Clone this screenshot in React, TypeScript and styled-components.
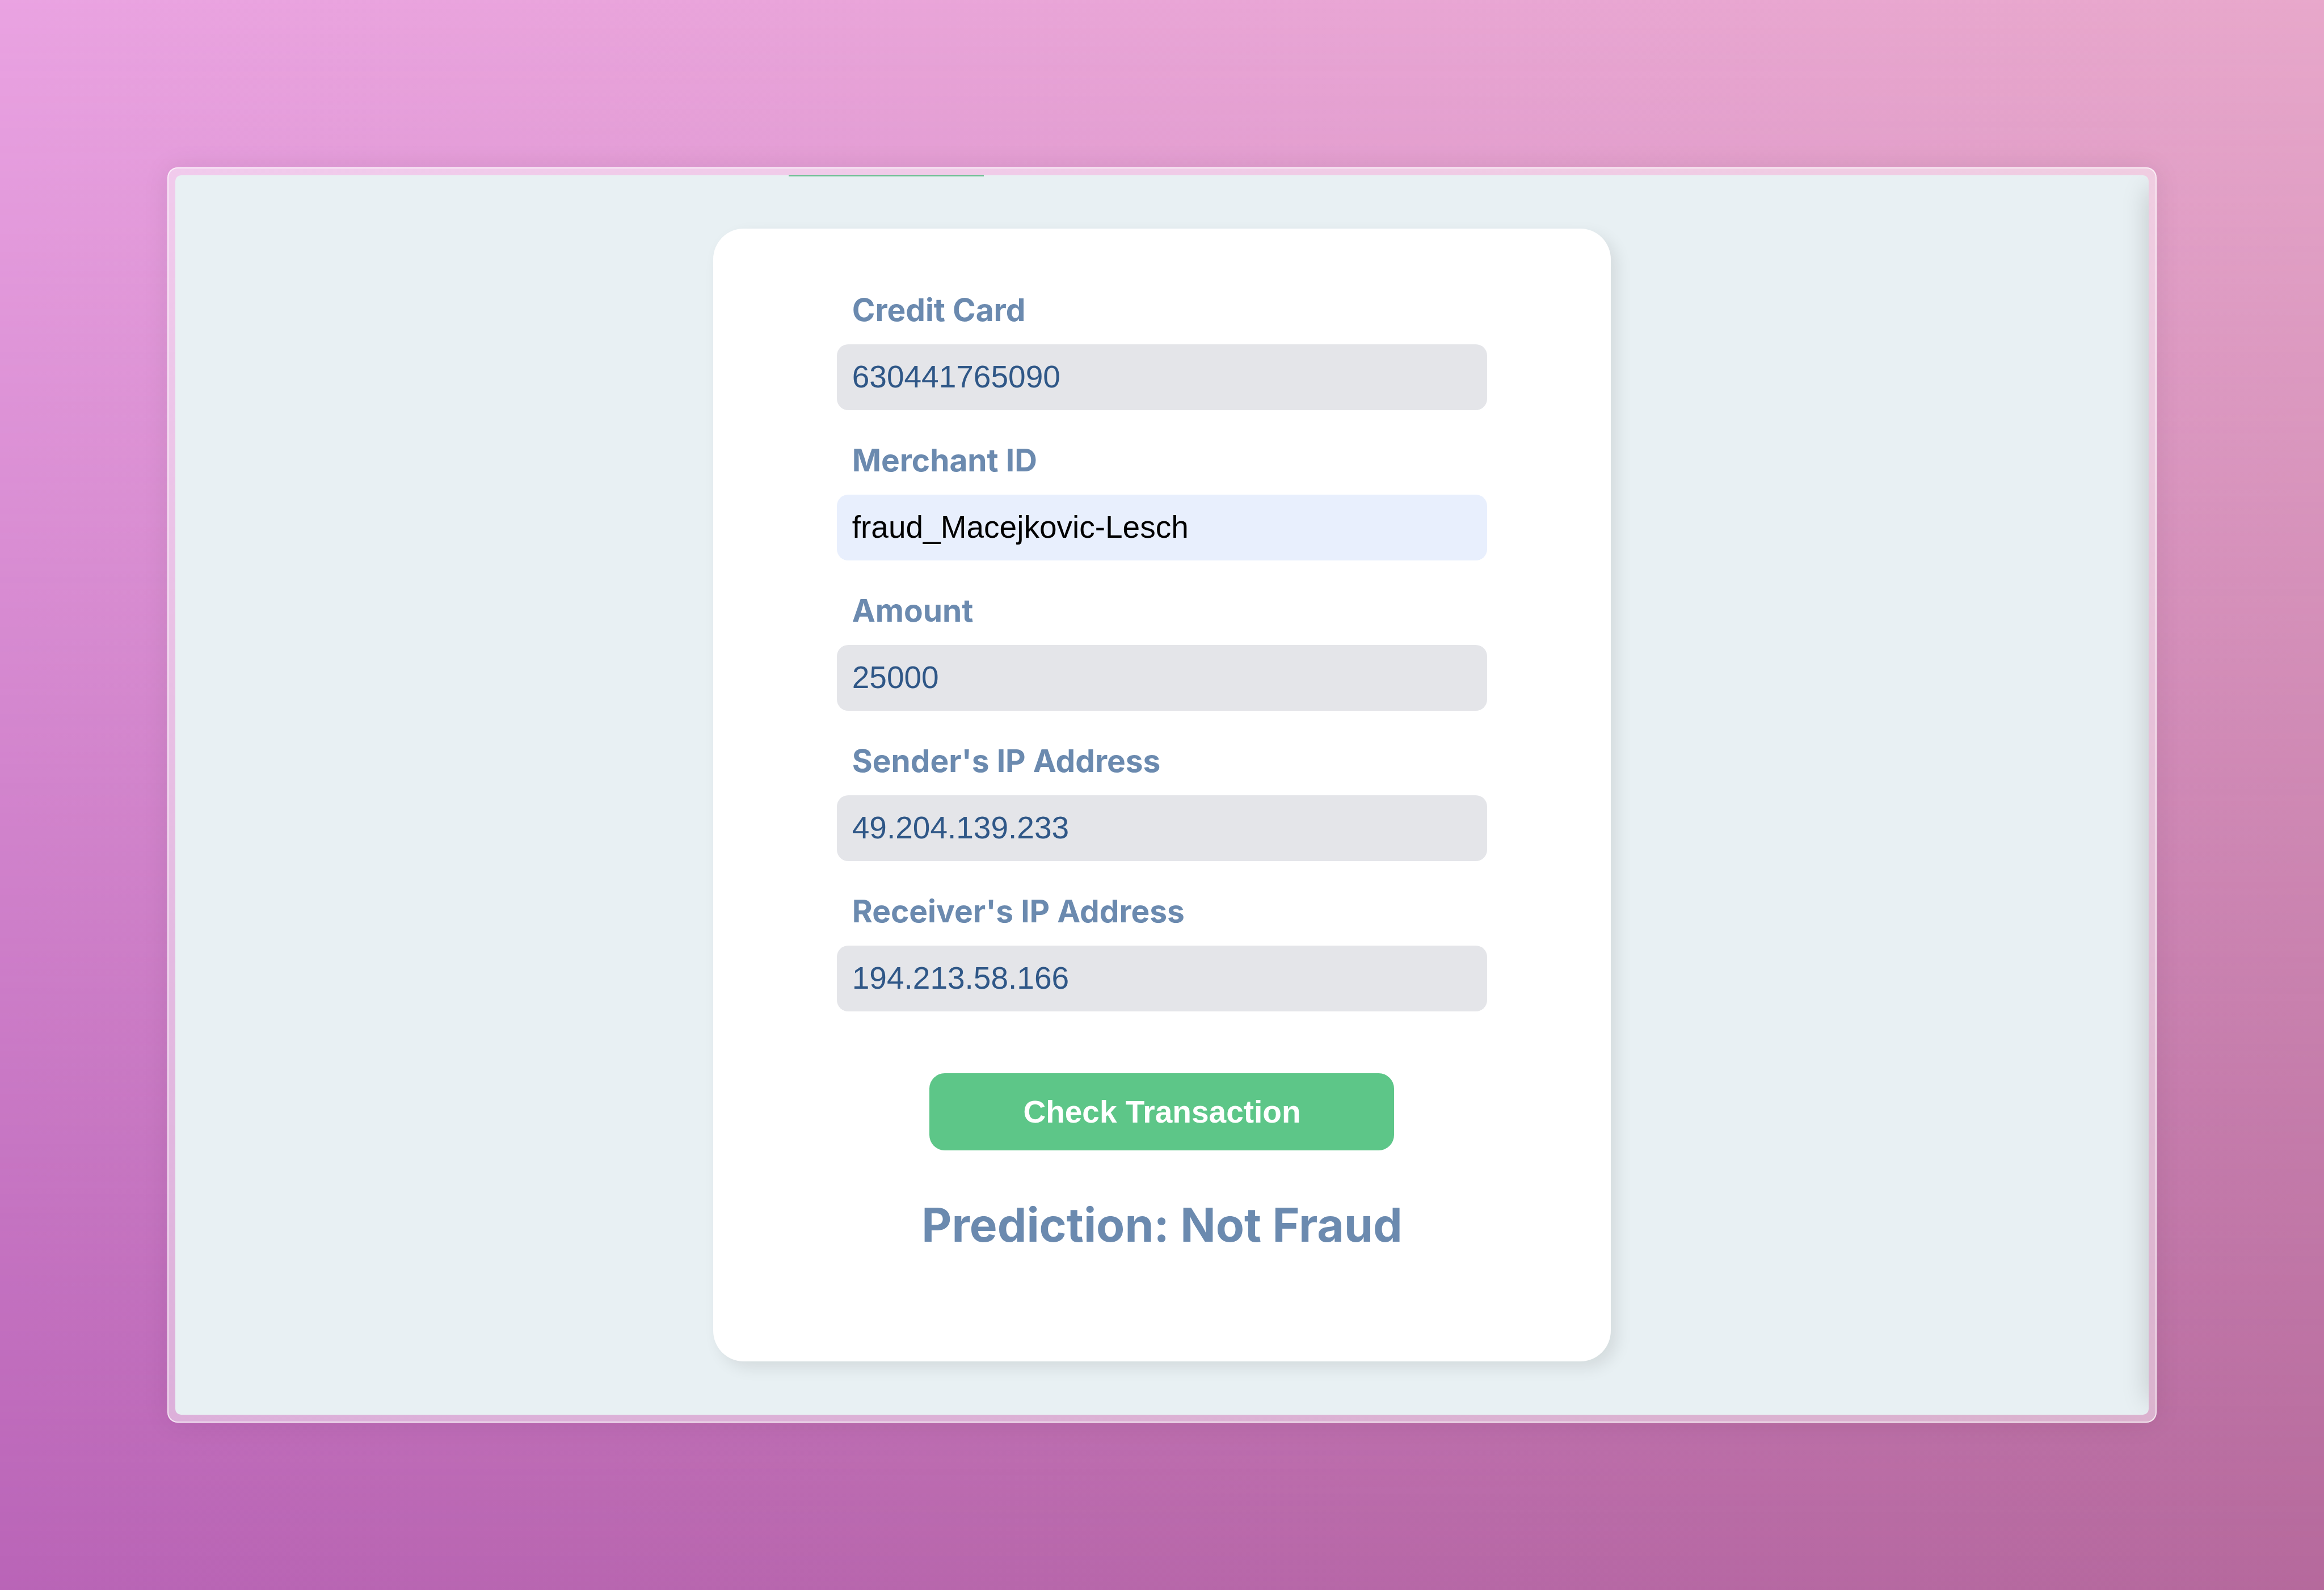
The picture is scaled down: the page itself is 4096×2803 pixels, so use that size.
import React, { useState } from "react";
import styled, { createGlobalStyle } from "styled-components";

const GlobalStyle = createGlobalStyle`
  *, *::before, *::after {
    box-sizing: border-box;
  }
  body {
    margin: 0;
  }
`;

const Page = styled.div`
  position: relative;
  isolation: isolate;
  min-height: 100vh;
  padding: 295px;
  font-family: Inter, "Liberation Sans", sans-serif;
  background: linear-gradient(to right, #eaa3e2, #e8a8cb);

  &::before {
    content: "";
    position: absolute;
    inset: 0;
    z-index: -1;
    background: linear-gradient(to right, #b964b7, #b5699c);
    mask-image: linear-gradient(to bottom, transparent, #000);
  }
`;

const Frame = styled.div`
  padding: 12px;
  border: 2px solid rgba(255, 255, 255, 0.66);
  border-radius: 18px;
  background: rgba(255, 255, 255, 0.47);
  box-shadow: 0 0 48px rgba(0, 0, 0, 0.08);
`;

const Pane = styled.main`
  position: relative;
  display: flex;
  flex-direction: column;
  overflow: hidden;
  padding-bottom: 94px;
  border-radius: 10px;
  background: #e8f0f3;

  &::after {
    content: "";
    position: absolute;
    top: 24px;
    bottom: 24px;
    left: 100%;
    width: 48px;
    box-shadow: 0 0 48px rgba(0, 0, 0, 0.18);
  }
`;

const ActiveTabEdge = styled.div`
  width: 344px;
  height: 2px;
  margin: 0 0 92px 1081px;
  background: #66bf8e;
`;

const Card = styled.form`
  display: flex;
  flex-direction: column;
  align-items: center;
  align-self: center;
  width: 45.5%;
  padding: 110px 218px 190px;
  border-radius: 54px;
  background: #fff;
  box-shadow: 11px 11px 28px rgba(0, 0, 0, 0.09);
`;

const Fields = styled.div`
  display: flex;
  flex-direction: column;
  gap: 55px;
  width: 100%;
`;

const Field = styled.div`
  display: flex;
  flex-direction: column;
  gap: 28px;
`;

const Label = styled.label`
  padding-left: 27px;
  color: #6b8aaf;
  font-size: 55px;
  font-weight: 700;
  line-height: 66px;
`;

const TextInput = styled.input<{ $autofilled?: boolean }>`
  width: 100%;
  height: 116px;
  padding: 0 27px 3px;
  border: 0;
  border-radius: 20px;
  outline: 0;
  background: ${(p) => (p.$autofilled ? "#e8effd" : "#e4e5e9")};
  color: ${(p) => (p.$autofilled ? "#000" : "#2f5787")};
  font-family: "Liberation Sans", Arial, sans-serif;
  font-size: 55px;
`;

const SubmitButton = styled.button`
  width: 819px;
  height: 136px;
  margin-top: 109px;
  padding: 0;
  border: 0;
  border-radius: 27px;
  background: #5dc688;
  color: #fff;
  font-family: "Liberation Sans", Arial, sans-serif;
  font-size: 55px;
  font-weight: 700;
  cursor: pointer;
`;

const Prediction = styled.h1`
  margin: 82px 0 0;
  color: #6b8aaf;
  font-size: 82px;
  font-weight: 700;
  line-height: 100px;
`;

const fields = [
  { id: "card", label: "Credit Card", value: "630441765090" },
  { id: "merchant", label: "Merchant ID", value: "fraud_Macejkovic-Lesch", autofilled: true },
  { id: "amount", label: "Amount", value: "25000" },
  { id: "sender", label: "Sender's IP Address", value: "49.204.139.233" },
  { id: "receiver", label: "Receiver's IP Address", value: "194.213.58.166" },
];

export default function App() {
  const [values, setValues] = useState<Record<string, string>>(
    Object.fromEntries(fields.map((f) => [f.id, f.value])),
  );

  return (
    <>
      <GlobalStyle />
      <Page>
        <Frame>
          <Pane>
            <ActiveTabEdge />
            <Card onSubmit={(e) => e.preventDefault()}>
              <Fields>
                {fields.map((f) => (
                  <Field key={f.id}>
                    <Label htmlFor={f.id}>{f.label}</Label>
                    <TextInput
                      id={f.id}
                      type="text"
                      spellCheck={false}
                      $autofilled={f.autofilled}
                      value={values[f.id]}
                      onChange={(e) => setValues({ ...values, [f.id]: e.target.value })}
                    />
                  </Field>
                ))}
              </Fields>
              <SubmitButton type="submit">Check Transaction</SubmitButton>
              <Prediction>Prediction: Not Fraud</Prediction>
            </Card>
          </Pane>
        </Frame>
      </Page>
    </>
  );
}
